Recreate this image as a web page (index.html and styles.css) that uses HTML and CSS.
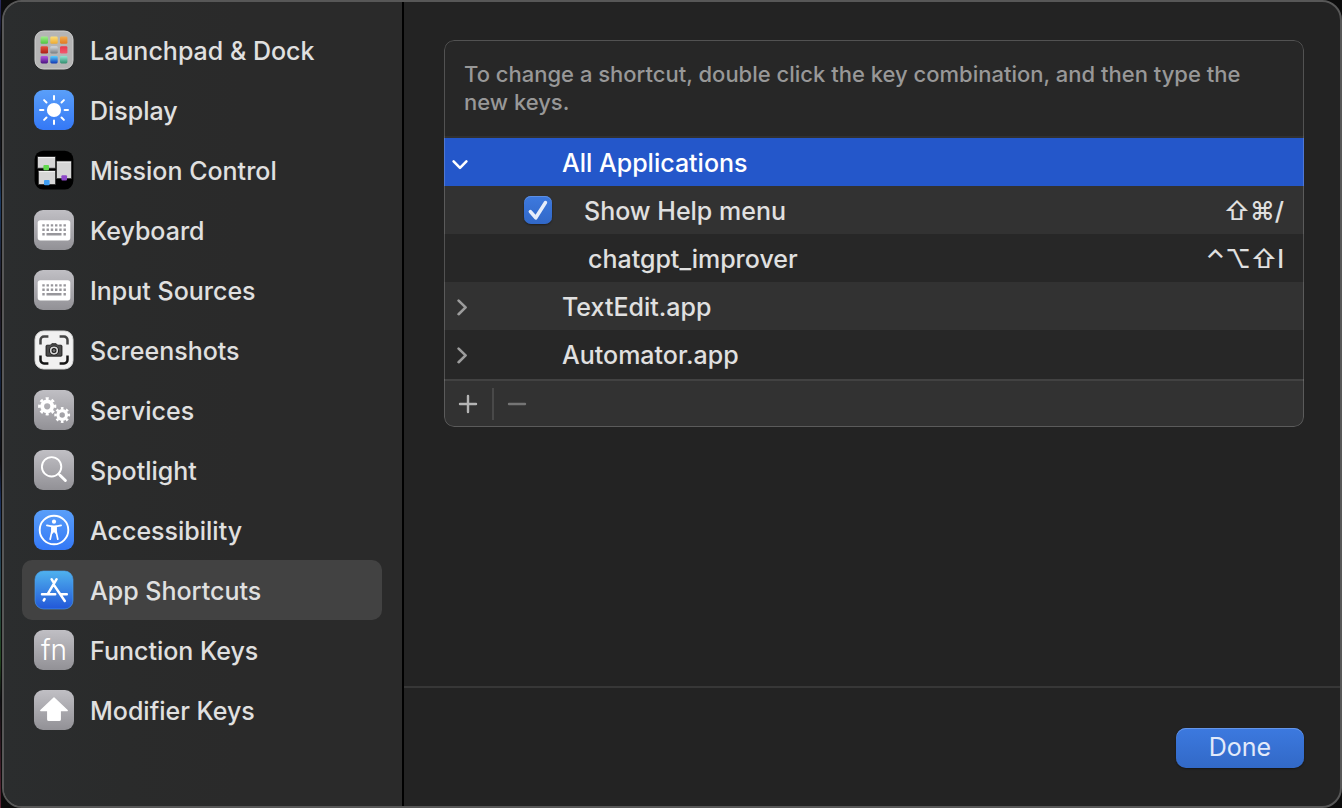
FILE: index.html
```html
<!DOCTYPE html>
<html lang="en">
<head>
<meta charset="utf-8">
<meta name="viewport" content="width=device-width, initial-scale=1">
<title>Keyboard Shortcuts</title>
<link rel="stylesheet" href="styles.css">
</head>
<body>
<svg class="defs" aria-hidden="true">
  <defs>
    <linearGradient id="gray" x2="0" y2="1"><stop stop-color="#c0bfc4"/><stop offset="1" stop-color="#929196"/></linearGradient>
    <linearGradient id="blue" x2="0" y2="1"><stop stop-color="#5a9ff9"/><stop offset="1" stop-color="#3478f6"/></linearGradient>
    <linearGradient id="store" x2="0" y2="1"><stop stop-color="#4fb2ee"/><stop offset="1" stop-color="#2257d8"/></linearGradient>
    <linearGradient id="c1" x2="0" y2="1"><stop stop-color="#a2ee8c"/><stop offset="1" stop-color="#4fc441"/></linearGradient>
    <linearGradient id="c2" x2="0" y2="1"><stop stop-color="#fbe07c"/><stop offset="1" stop-color="#eeaa32"/></linearGradient>
    <linearGradient id="c3" x2="0" y2="1"><stop stop-color="#f3ae50"/><stop offset="1" stop-color="#e07822"/></linearGradient>
    <linearGradient id="c4" x2="0" y2="1"><stop stop-color="#e8503c"/><stop offset="1" stop-color="#aa2018"/></linearGradient>
    <linearGradient id="c5" x2="0" y2="1"><stop stop-color="#d5dade"/><stop offset="1" stop-color="#787e82"/></linearGradient>
    <linearGradient id="c6" x2="0" y2="1"><stop stop-color="#e8384c"/><stop offset="1" stop-color="#f25a70"/></linearGradient>
    <linearGradient id="c7" x2="0" y2="1"><stop stop-color="#b558e0"/><stop offset="1" stop-color="#4c1482"/></linearGradient>
    <linearGradient id="c8" x2="0" y2="1"><stop stop-color="#58d0ff"/><stop offset="1" stop-color="#1438b4"/></linearGradient>
    <linearGradient id="c9" x2="0" y2="1"><stop stop-color="#8ee6d2"/><stop offset="1" stop-color="#349070"/></linearGradient>
    <symbol id="keys" viewBox="0 0 40 40">
      <rect width="40" height="40" rx="9" fill="url(#gray)"/>
      <rect x="3.7" y="10.2" width="32.6" height="20.2" rx="2.6" fill="#fff"/>
      <g stroke="#98979c" stroke-width="2.4" fill="none">
        <path d="M8.3 15.4H32" stroke-dasharray="2.4 1.84"/>
        <path d="M8.3 19.8H32" stroke-dasharray="2.4 1.84"/>
        <path d="M8.3 24.2h2.4M12.5 24.2h15M29.5 24.2h2.4"/>
      </g>
    </symbol>
  </defs>
</svg>
<div class="window">
  <nav class="sidebar" aria-label="Shortcut categories">
    <a class="item" href="#launchpad">
      <svg class="icon" viewBox="0 0 40 40" aria-hidden="true">
        <rect x="1" y="1" width="38" height="38" rx="8.5" fill="#b5b5b5" stroke="#d2d2d2"/>
        <rect x="6.6" y="6.4" width="7.4" height="7.4" rx="1.4" fill="url(#c1)"/><rect x="16.3" y="6.4" width="7.4" height="7.4" rx="1.4" fill="url(#c2)"/><rect x="26" y="6.4" width="7.4" height="7.4" rx="1.4" fill="url(#c3)"/>
        <rect x="6.6" y="16.2" width="7.4" height="7.4" rx="1.4" fill="url(#c4)"/><rect x="16.3" y="16.2" width="7.4" height="7.4" rx="1.4" fill="url(#c5)"/><rect x="26" y="16.2" width="7.4" height="7.4" rx="1.4" fill="url(#c6)"/>
        <rect x="6.6" y="26" width="7.4" height="7.4" rx="1.4" fill="url(#c7)"/><rect x="16.3" y="26" width="7.4" height="7.4" rx="1.4" fill="url(#c8)"/><rect x="26" y="26" width="7.4" height="7.4" rx="1.4" fill="url(#c9)"/>
      </svg>
      <span class="label">Launchpad &amp; Dock</span>
    </a>
    <a class="item" href="#display">
      <svg class="icon" viewBox="0 0 40 40" aria-hidden="true">
        <rect width="40" height="40" rx="9" fill="url(#blue)"/>
        <circle cx="20" cy="20" r="7.1" fill="#fff"/>
        <path d="M20 6v3.4M20 30.6V34M6 20h3.4M30.6 20H34M10.1 10.1l2.4 2.4M27.5 27.5l2.4 2.4M10.1 29.9l2.4-2.4M27.5 12.5l2.4-2.4" stroke="#fff" stroke-width="2" stroke-linecap="round"/>
      </svg>
      <span class="label">Display</span>
    </a>
    <a class="item" href="#mission-control">
      <svg class="icon" viewBox="0 0 40 40" aria-hidden="true">
        <rect x=".6" y=".8" width="38.8" height="38.6" rx="8.6" fill="#000"/>
        <g fill="#d6d6d6" stroke="#303030" stroke-width=".8"><rect x="3.6" y="6.8" width="17.8" height="11.4"/><rect x="4.4" y="20.8" width="17" height="13.6"/><rect x="22.6" y="11.2" width="14.8" height="17.4"/></g>
        <path d="M4 7.6h17M4.8 21.6h16.2M23 12h14" stroke="#fff" stroke-width=".9"/>
        <rect x="9.4" y="15" width="5.6" height="5.2" rx="1" fill="#62d94e"/><rect x="10" y="30" width="5.6" height="5.2" rx="1" fill="#3e9df2"/><rect x="27.4" y="25.2" width="5.6" height="5.4" rx="1" fill="#8d48c8"/>
      </svg>
      <span class="label">Mission Control</span>
    </a>
    <a class="item" href="#keyboard">
      <svg class="icon" aria-hidden="true"><use href="#keys"/></svg>
      <span class="label">Keyboard</span>
    </a>
    <a class="item" href="#input-sources">
      <svg class="icon" aria-hidden="true"><use href="#keys"/></svg>
      <span class="label">Input Sources</span>
    </a>
    <a class="item" href="#screenshots">
      <svg class="icon" viewBox="0 0 40 40" aria-hidden="true">
        <rect x="1" y="1" width="38" height="38" rx="8.5" fill="#f1f1f1" stroke="#d8d8d8"/>
        <g fill="none" stroke-width="2.5"><path d="M6.5 14.4V10a3.5 3.5 0 0 1 3.5-3.5h4.4M25.6 6.5H30a3.5 3.5 0 0 1 3.5 3.5v4.4" stroke="#454545"/><path d="M6.5 25.6V30a3.5 3.5 0 0 0 3.5 3.5h4.4M25.6 33.5H30a3.5 3.5 0 0 0 3.5-3.5v-4.4" stroke="#141414"/></g>
        <path d="M13 15.2h3.4l1.4-1.5h4.4l1.4 1.5H27a1 1 0 0 1 1 1v9a1 1 0 0 1-1 1H13a1 1 0 0 1-1-1v-9a1 1 0 0 1 1-1z" fill="#4b4b4b" stroke="#111" stroke-width=".8"/>
        <circle cx="20" cy="20.6" r="4.9" fill="#181818"/><circle cx="20" cy="20.6" r="3.3" fill="none" stroke="#d8d8d8" stroke-width="1.6"/>
        <circle cx="20" cy="20.6" r="1.4" fill="#777"/>
      </svg>
      <span class="label">Screenshots</span>
    </a>
    <a class="item" href="#services">
      <svg class="icon" viewBox="0 0 40 40" aria-hidden="true">
        <rect width="40" height="40" rx="9" fill="url(#gray)"/>
        <g fill="none" stroke="#fff">
          <circle cx="13.2" cy="16.3" r="5" stroke-width="3.8"/><circle cx="13.2" cy="16.3" r="7.7" stroke-width="2.8" pathLength="16" stroke-dasharray="1 1" stroke-dashoffset=".5"/>
          <circle cx="28.2" cy="25" r="4.3" stroke-width="3.2"/><circle cx="28.2" cy="25" r="6.7" stroke-width="2.4" pathLength="16" stroke-dasharray="1 1" stroke-dashoffset=".5"/>
        </g>
      </svg>
      <span class="label">Services</span>
    </a>
    <a class="item" href="#spotlight">
      <svg class="icon" viewBox="0 0 40 40" aria-hidden="true">
        <rect width="40" height="40" rx="9" fill="url(#gray)"/>
        <g fill="none" stroke="#fff" stroke-linecap="round"><circle cx="17.6" cy="16.8" r="9.7" stroke-width="1.9"/><path d="M24.4 23.8l1.6 1.6" stroke-width="2"/><path d="M26 25.2l5.4 5.3" stroke-width="2.9"/></g>
      </svg>
      <span class="label">Spotlight</span>
    </a>
    <a class="item" href="#accessibility">
      <svg class="icon" viewBox="0 0 40 40" aria-hidden="true">
        <rect width="40" height="40" rx="9" fill="url(#blue)"/>
        <circle cx="20" cy="20" r="14.3" fill="none" stroke="#fff" stroke-width="1.9"/>
        <circle cx="20" cy="11.7" r="2.1" fill="#fff"/>
        <path d="M12.9 15.4l5.1.9v4.6l-1.8 8.3M27.1 15.4l-5.1.9v4.6l1.8 8.3" fill="none" stroke="#fff" stroke-width="1.7" stroke-linecap="round" stroke-linejoin="round"/>
        <path d="M17.3 15.6h5.4v6.2l-1.2 2.2-1.5-2-1.5 2-1.2-2.2z" fill="#fff"/>
      </svg>
      <span class="label">Accessibility</span>
    </a>
    <a class="item selected" href="#app-shortcuts" aria-current="page">
      <svg class="icon" viewBox="0 0 40 40" aria-hidden="true">
        <rect x="1" y="1" width="38" height="38" rx="8.5" fill="url(#store)" stroke="#4aa2f0" stroke-opacity=".6"/>
        <g fill="none" stroke="#fff" stroke-width="2.5" stroke-linecap="round"><path d="M22.6 9.2L14 23.6M17.6 9.2l1.6 2.6M8 24.2h13.2M20.4 15.6L30.8 31M27.4 24.2h5.4M10.6 29l-.9 1.5"/></g>
      </svg>
      <span class="label">App Shortcuts</span>
    </a>
    <a class="item" href="#function-keys">
      <svg class="icon" viewBox="0 0 40 40" aria-hidden="true">
        <rect width="40" height="40" rx="9" fill="url(#gray)"/>
        <text class="fn" x="20" y="30" text-anchor="middle">fn</text>
      </svg>
      <span class="label">Function Keys</span>
    </a>
    <a class="item" href="#modifier-keys">
      <svg class="icon" viewBox="0 0 40 40" aria-hidden="true">
        <rect width="40" height="40" rx="9" fill="url(#gray)"/>
        <path d="M20 8L33.2 20.6H26.2V29.4a1 1 0 0 1-1 1H14.8a1 1 0 0 1-1-1V20.6H6.8z" fill="#fff" stroke="#fff" stroke-width="1.4" stroke-linejoin="round"/>
      </svg>
      <span class="label">Modifier Keys</span>
    </a>
  </nav>
  <main class="main">
    <section class="content">
      <div class="panel">
        <p class="hint">To change a shortcut, double click the key combination, and then type the new keys.</p>
        <table class="list">
          <tbody>
            <tr class="active">
              <td class="toggle"><button type="button" aria-label="Collapse All Applications" aria-expanded="true"><svg class="chevron" viewBox="0 0 20 20"><path d="M3.6 9.4l6.4 6.4 6.4-6.4"/></svg></button></td>
              <td class="name">All Applications</td>
              <td class="combo"></td>
            </tr>
            <tr>
              <td class="toggle"><span class="check"><input type="checkbox" id="help" checked><svg viewBox="0 0 28 28" aria-hidden="true"><path d="M6.4 15.6l5.4 6.2L21.4 6.6"/></svg></span></td>
              <td class="name child"><label for="help">Show Help menu</label></td>
              <td class="combo">⇧⌘/</td>
            </tr>
            <tr>
              <td class="toggle"></td>
              <td class="name custom">chatgpt_improver</td>
              <td class="combo">⌃⌥⇧I</td>
            </tr>
            <tr>
              <td class="toggle"><button type="button" aria-label="Expand TextEdit.app" aria-expanded="false"><svg class="chevron" viewBox="0 0 20 20"><path d="M8.6 4.6l7 6.8-7 6.8"/></svg></button></td>
              <td class="name">TextEdit.app</td>
              <td class="combo"></td>
            </tr>
            <tr>
              <td class="toggle"><button type="button" aria-label="Expand Automator.app" aria-expanded="false"><svg class="chevron" viewBox="0 0 20 20"><path d="M8.6 4.6l7 6.8-7 6.8"/></svg></button></td>
              <td class="name">Automator.app</td>
              <td class="combo"></td>
            </tr>
          </tbody>
        </table>
        <div class="tools">
          <button type="button" aria-label="Add"><svg viewBox="0 0 20 20"><path d="M10 2v16M2 10h16"/></svg></button>
          <button type="button" aria-label="Remove" disabled><svg viewBox="0 0 20 20"><path d="M2 10h16"/></svg></button>
        </div>
      </div>
    </section>
    <footer class="footer"><button class="done" type="button">Done</button></footer>
  </main>
</div>
</body>
</html>
```
FILE: styles.css
```css
* { box-sizing: border-box; }

body {
  margin: 0;
  padding-left: 2px;
  background: linear-gradient(#2d2d63 0, #10131c 40px, #15181f 160px, #1b3a63 200px, #22181f 300px, #14233f 380px, #0d0d10 460px, #1b2f5c 500px, #274554 570px, #22451f 660px, #101014 700px, #5d2637 100%);
  font-family: Inter, "Liberation Sans", sans-serif;
  font-size: 25px;
  font-weight: 500;
  color: #e0e0e0;
}

button { padding: 0; border: 0; background: none; color: inherit; font: inherit; }

.defs { position: absolute; width: 0; height: 0; }

.window {
  display: flex;
  min-height: 100vh;
  overflow: hidden;
  border: 2px solid #575757;
  border-radius: 20px;
  background: #232323;
  box-shadow: 0 0 0 20px #0c0c0c;
  clip-path: inset(0 0 0 -1px);
}

.sidebar {
  display: flex;
  flex-direction: column;
  flex: 0 0 400px;
  padding: 18px 20px 18px 18px;
  border-right: 2px solid #000;
  background: linear-gradient(90deg, #2b2d2e, #2a2b2b 30%, #2a2a2a 60%);
}

.item {
  display: flex;
  align-items: center;
  gap: 16px;
  height: 60px;
  padding: 0 12px;
  border-radius: 10px;
  color: inherit;
  line-height: 32px;
  text-decoration: none;
  white-space: nowrap;
}

.item.selected { background: #424242; }

.label { padding-top: 2px; }

.icon { flex: none; width: 40px; height: 40px; }

.fn { font-size: 28px; font-weight: 300; fill: #fff; }

.main { display: flex; flex: 1; flex-direction: column; min-width: 0; }

.content { flex: 1; padding: 38px 36px 38px 40px; }

.panel {
  position: relative;
  overflow: hidden;
  border-radius: 10px;
  background: #272727;
}

.panel::after {
  content: "";
  position: absolute;
  inset: 0;
  border: 1px solid rgba(255, 255, 255, 0.2);
  border-radius: 10px;
  pointer-events: none;
}

.hint {
  margin: 0;
  padding: 20px;
  border-bottom: 2px solid #303030;
  color: #989898;
  font-size: 22px;
  line-height: 28px;
}

.list { width: 100%; margin-bottom: 1px; border-collapse: collapse; }

.list tr { height: 48px; }

.list tr:nth-child(even) { background: #323232; }

.list .active { background: #2457ca; color: #fff; }

.list td { padding: 0; line-height: 32px; }

.list .name, .list .combo { padding-top: 2px; }

.list .toggle { width: 118px; padding-left: 6px; color: #9c9c9c; }

.list .active .toggle { color: #fff; }

.toggle button { display: block; }

.chevron {
  display: block;
  width: 20px;
  height: 20px;
  fill: none;
  stroke: currentColor;
  stroke-width: 2.6;
  stroke-linecap: round;
  stroke-linejoin: round;
}

.list .child { padding-left: 22px; }

.list .custom { padding-left: 26px; }

.list .combo { padding-right: 20px; text-align: right; }

.check { display: grid; width: 28px; margin-left: 74px; }

.check input, .check svg { grid-area: 1 / 1; width: 28px; height: 28px; margin: 0; }

.check input {
  appearance: none;
  border-radius: 7px;
  background: linear-gradient(#3d79de, #3168c8);
  box-shadow: inset 0 1px 0 #5c8fe5, 0 1px 2px rgba(0, 0, 0, 0.4);
}

.check svg {
  position: relative;
  fill: none;
  stroke: #e6edfa;
  stroke-width: 3.6;
  stroke-linecap: round;
  stroke-linejoin: round;
  opacity: 0;
  pointer-events: none;
}

.check input:checked + svg { opacity: 1; }

.tools {
  display: flex;
  align-items: center;
  height: 48px;
  border-top: 2px solid #424242;
  background: #323232;
}

.tools button {
  display: grid;
  place-items: center;
  width: 48px;
  height: 32px;
  color: #b4b4b4;
}

.tools button + button { border-left: 2px solid #494949; color: #757575; }

.tools svg {
  width: 20px;
  height: 20px;
  fill: none;
  stroke: currentColor;
  stroke-width: 2.4;
  stroke-linecap: round;
}

.footer {
  display: flex;
  justify-content: flex-end;
  padding: 40px 36px 38px;
  border-top: 2px solid #373737;
}

.done {
  width: 128px;
  height: 40px;
  padding-bottom: 2px;
  border-radius: 10px;
  background: linear-gradient(#3c79df, #3269c7);
  box-shadow: inset 0 1px 0 #6596ea, 0 1px 2px rgba(0, 0, 0, 0.4);
  color: #e2eafa;
  font-weight: 400;
}
```
